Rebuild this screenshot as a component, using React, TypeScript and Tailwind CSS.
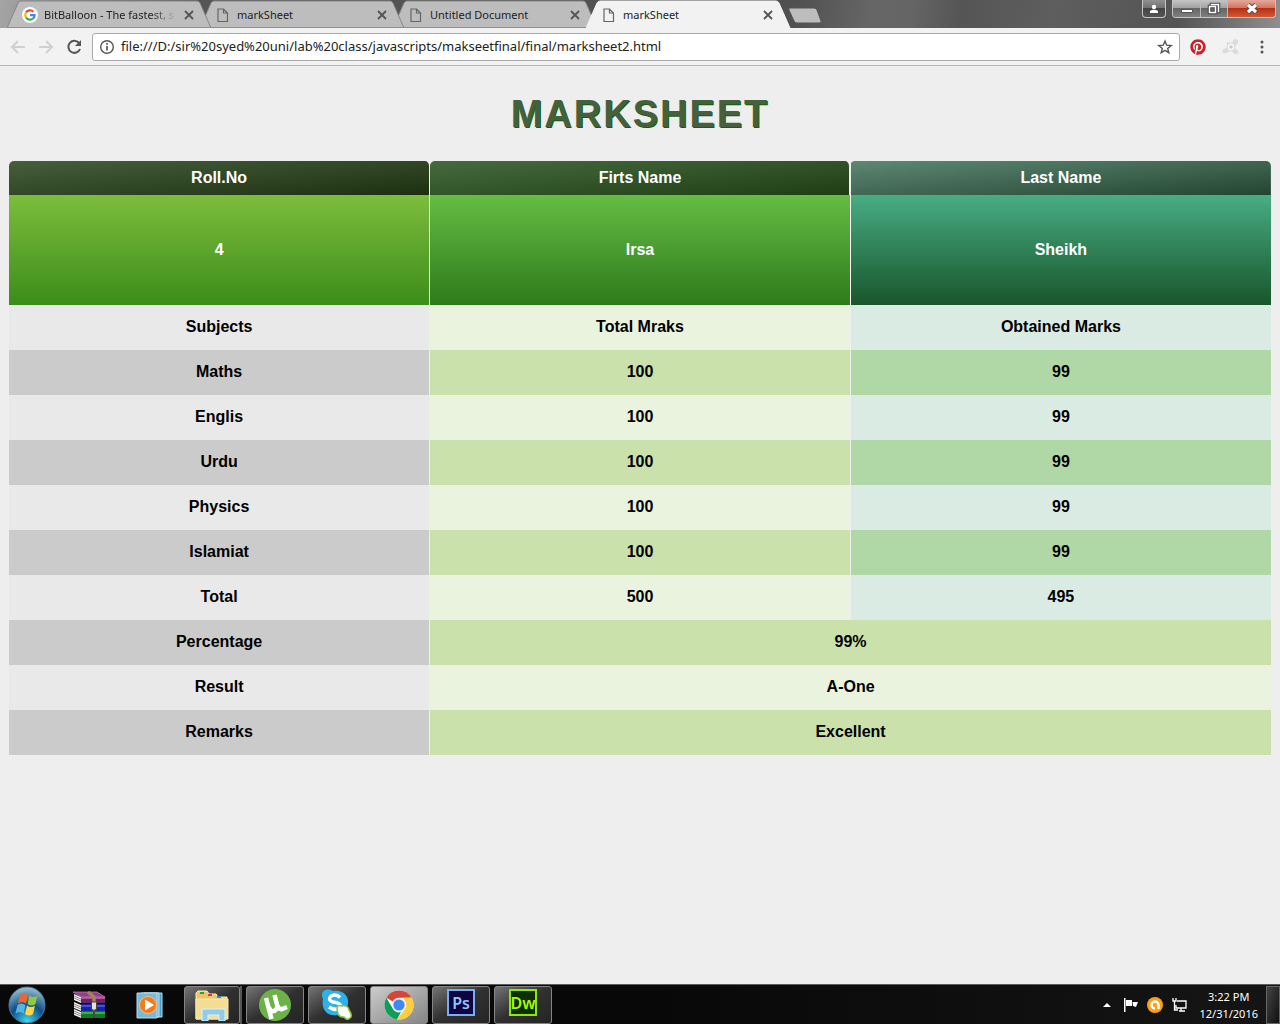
import { useState } from "react";
import { FaPinterest } from "react-icons/fa";

const tabs = [
  { title: "BitBalloon - The fastest, s", google: true, layer: "z-[3]" },
  { title: "markSheet", layer: "z-[2]" },
  { title: "Untitled Document", layer: "z-[1]" },
  { title: "markSheet", active: true, layer: "z-[4]" },
];

function PageIcon() {
  return (
    <svg className="h-4 w-4 shrink-0" viewBox="0 0 16 16" fill="none" stroke="#666" strokeWidth="1.2">
      <path d="M3 2h5.5l4 4v8.5H3zM8.5 2v4h4" />
    </svg>
  );
}

function GoogleIcon() {
  return (
    <svg className="h-4 w-4 shrink-0" viewBox="0 0 16 16" fill="none" strokeWidth="2.2">
      <circle cx="8" cy="8" r="8" fill="#fff" />
      <path d="M4 5.5a4.6 4.6 0 0 1 7.3-.8" stroke="#ea4335" />
      <path d="M4 5.5a4.8 4.8 0 0 0 0 5" stroke="#fbbc05" />
      <path d="M4 10.5a4.6 4.6 0 0 0 7 1" stroke="#34a853" />
      <path d="M8 8.2h4.6q0 2.2-1.6 3.3" stroke="#4285f4" />
    </svg>
  );
}

function Tab({ title, google, active, layer }: { title: string; google?: boolean; active?: boolean; layer: string }) {
  return (
    <li className={`relative -mr-[13px] flex h-7 w-[206px] shrink-0 items-center ${layer}`}>
      <svg className="absolute inset-0 h-full w-full" viewBox="0 0 206 28">
        <path d="M0 28L11 3Q12 1 14 1H190Q192 1 193 3L204 28" fill={active ? "#f2f2f2" : "#bdbdbd"} stroke={active ? "#f2f2f2" : "#858585"} />
        {!active && <path d="M0 27.5H206" stroke="#8e8e8e" />}
      </svg>
      <div className="relative flex w-full items-center gap-1.5 pr-[18px] pl-[15px] pt-0.5">
        {google ? <GoogleIcon /> : <PageIcon />}
        <span className={`flex-1 whitespace-nowrap text-[11px] leading-4 text-[#222] ${google ? "[mask-image:linear-gradient(to_right,black_80%,transparent)]" : ""}`}>{title}</span>
        <button aria-label="Close tab" className="h-3 w-3">
          <svg viewBox="0 0 12 12" stroke="#555" strokeWidth="1.8"><path d="M2 2l8 8M10 2l-8 8" /></svg>
        </button>
      </div>
    </li>
  );
}

function WindowControls() {
  const glass = "flex items-center justify-center border-r border-[#bbb] bg-[linear-gradient(#c4c4c4,#a0a0a0_50%,#656565_50%,#808080)]";
  return (
    <div className="mr-1 ml-auto flex shrink-0 gap-1.5">
      <button aria-label="Profile" className="flex h-[18px] w-6 items-center justify-center rounded-b border border-t-0 border-[#c5c5c5] bg-[linear-gradient(#909090,#707070_50%,#444_50%,#555)]">
        <svg className="h-3 w-3" viewBox="0 0 12 12" fill="#fff"><circle cx="6" cy="4" r="2.2" /><path d="M2 10V8q4-2.5 8 0v2z" /></svg>
      </button>
      <div className="flex h-[18px] overflow-hidden rounded-b border border-t-0 border-[#c5c5c5]">
        <button aria-label="Minimize" className={`w-7 ${glass}`}>
          <svg className="h-4 w-4" viewBox="0 0 16 16" fill="#fff" stroke="#555"><path d="M2.5 8.5h11v3h-11z" /></svg>
        </button>
        <button aria-label="Restore" className={`w-[27px] ${glass}`}>
          <svg className="h-4 w-4" viewBox="0 0 16 16" fill="none"><path d="M5.5 4V3.5h7v7H12M3.5 5.5h6v6h-6z" stroke="#444" strokeWidth="3.5" /><path d="M5.5 4V3.5h7v7H12M3.5 5.5h6v6h-6z" stroke="#fff" strokeWidth="1.5" /></svg>
        </button>
        <button aria-label="Close window" className="flex w-[47px] items-center justify-center bg-[linear-gradient(#e5a99c,#d0705a_50%,#b82f12_50%,#d05a35)]">
          <svg className="h-4 w-4" viewBox="0 0 16 16"><path d="M4 4l8 7M12 4l-8 7" stroke="#555" strokeWidth="5" /><path d="M4 4l8 7M12 4l-8 7" stroke="#fff" strokeWidth="3" /></svg>
        </button>
      </div>
    </div>
  );
}

function BrowserBar() {
  const [url, setUrl] = useState("file:///D:/sir%20syed%20uni/lab%20class/javascripts/makseetfinal/final/marksheet2.html");
  return (
    <header className="shrink-0 font-['Noto_Sans','Open_Sans',sans-serif]">
      <div className="flex h-7 bg-[linear-gradient(100deg,#a5a5a5,#555_15%,#505050_62%,#666_68%,#656565_71%,#555_75%,#5e5e5e_82%,#545454_92%,#8f8f8f)]">
        <ul className="flex pl-[7px]" aria-label="Tabs">
          {tabs.map((tab, i) => <Tab key={i} {...tab} />)}
        </ul>
        <button aria-label="New tab" className="ml-2 h-7 w-9 shrink-0">
          <svg viewBox="0 0 36 28"><path d="M3 8h24q2 0 3 2l4 11q1 2-2 2H10q-2 0-3-2L2 10q-1-2 1-2z" fill="#bdbdbd" stroke="#555" /></svg>
        </button>
        <WindowControls />
      </div>
      <div className="flex h-[38px] items-center border-b border-[#b6b6b6] bg-[#f2f2f2] pr-2.5 pl-2">
        <button aria-label="Back" className="mr-2 h-5 w-5"><svg viewBox="0 0 20 20" fill="none" stroke="#d0d0d0" strokeWidth="2"><path d="M17 10H4M10 4l-6 6 6 6" /></svg></button>
        <button aria-label="Forward" className="mr-2 h-5 w-5"><svg viewBox="0 0 20 20" fill="none" stroke="#d0d0d0" strokeWidth="2"><path d="M3 10h13M10 4l6 6-6 6" /></svg></button>
        <button aria-label="Reload" className="mr-2 h-5 w-5"><svg viewBox="0 0 20 20" fill="none" stroke="#555" strokeWidth="2"><path d="M15 6a6 6 0 1 0 1 6" /><path d="M17 3v6h-6z" fill="#555" stroke="none" /></svg></button>
        <div className="flex h-7 min-w-0 flex-1 items-center gap-1.5 rounded-[3px] border border-[#a9a9a9] bg-white px-1.5">
          <svg className="h-4 w-4 shrink-0" viewBox="0 0 16 16" fill="none" stroke="#555" strokeWidth="1.4"><circle cx="8" cy="8" r="6.3" /><path d="M8 7v4.5M8 4v1.7" strokeWidth="1.7" /></svg>
          <input aria-label="Address" className="min-w-0 flex-1 bg-transparent text-[13px] text-[#222] outline-none" value={url} onChange={(e) => setUrl(e.target.value)} />
          <button aria-label="Bookmark this page" className="h-4 w-4"><svg viewBox="0 0 16 16" fill="none" stroke="#555" strokeWidth="1.4"><path d="M8 2l1.7 4.2 4.5.3-3.5 2.9 1.1 4.4L8 11.4l-3.8 2.4 1.1-4.4L1.8 6.5l4.5-.3z" /></svg></button>
        </div>
        <button aria-label="Pinterest" className="ml-2.5 flex h-4 w-4 items-center justify-center rounded-full bg-white"><FaPinterest size={16} color="#cb2027" /></button>
        <button aria-label="Extension" className="ml-4 h-[18px] w-[18px]"><svg viewBox="0 0 18 18" fill="#dcdcdc"><circle cx="13.5" cy="3.5" r="2.5" /><circle cx="14" cy="14" r="2.5" /><circle cx="3" cy="13" r="2.5" /><path d="M5 4l4 1 4-2 2 2-2 4 2 5-3 1-3-2-5 2-3-2 4-4z" /><circle cx="9" cy="9" r="2.5" fill="#ccc" stroke="#f8f8f8" strokeWidth="1.5" /></svg></button>
        <button aria-label="Menu" className="ml-3.5 h-4 w-4"><svg viewBox="0 0 16 16" fill="#555"><circle cx="8" cy="3" r="1.5" /><circle cx="8" cy="8" r="1.5" /><circle cx="8" cy="13" r="1.5" /></svg></button>
      </div>
    </header>
  );
}

const rows = [
  ["Subjects", "Total Mraks", "Obtained Marks"],
  ["Maths", "100", "99"],
  ["Englis", "100", "99"],
  ["Urdu", "100", "99"],
  ["Physics", "100", "99"],
  ["Islamiat", "100", "99"],
  ["Total", "500", "495"],
  ["Percentage", "99%"],
  ["Result", "A-One"],
  ["Remarks", "Excellent"],
];

function Marksheet() {
  return (
    <main className="flex-1 bg-[#eee] px-2 font-['Liberation_Sans',Arial,sans-serif]">
      <h1 className="pt-[26px] text-center text-[38px] leading-[44px] font-bold tracking-[2px] text-[#465f3d] [text-shadow:1px_1px_0_#0a640a]">MARKSHEET</h1>
      <table className="mx-px mt-[25px] w-[calc(100%-2px)] table-fixed border-collapse text-center text-base leading-6 font-bold text-black">
        <thead className="text-white">
          <tr className="h-[34px]">
            <th scope="col" className="rounded-t-[5px] border-r border-[#eee] bg-[linear-gradient(175deg,#465f3c,#1c3010)] bg-clip-padding">Roll.No</th>
            <th scope="col" className="rounded-t-[5px] border-r border-[#eee] bg-[linear-gradient(175deg,#456b3d,#1f3d14)] bg-clip-padding">Firts Name</th>
            <th scope="col" className="rounded-t-[5px] bg-[linear-gradient(175deg,#5d8874,#234430)]">Last Name</th>
          </tr>
          <tr className="h-[110px]">
            <td className="border-r border-white bg-linear-to-b from-[#7dbd3c] to-[#3b8d19] bg-clip-padding">4</td>
            <td className="border-r border-white bg-linear-to-b from-[#65bd43] to-[#2d7b1b] bg-clip-padding">Irsa</td>
            <td className="bg-linear-to-b from-[#48ad84] to-[#19562c]">Sheikh</td>
          </tr>
        </thead>
        <tbody>
          {rows.map(([label, total, obtained], i) => (
            <tr key={label} className="h-[45px]">
              <th scope="row" className={`border-r border-[#eee] pb-0.5 ${i % 2 ? "bg-[#cbcbcb]" : "bg-[#e9e9e9]"}`}>{label}</th>
              <td colSpan={obtained ? 1 : 2} className={`pb-0.5 ${obtained ? "border-r border-[#eee]" : ""} ${i % 2 ? "bg-[#cae1ab]" : "bg-[#e9f3de]"}`}>{total}</td>
              {obtained && <td className={`pb-0.5 ${i % 2 ? "bg-[#b0d7a6]" : "bg-[#daebe4]"}`}>{obtained}</td>}
            </tr>
          ))}
        </tbody>
      </table>
    </main>
  );
}

function StartIcon() {
  return (
    <svg viewBox="0 0 38 38">
      <defs><radialGradient id="orb" cx=".5" cy=".95" r=".95"><stop stopColor="#3fd6f0" /><stop offset=".5" stopColor="#0f4f86" /><stop offset="1" stopColor="#9cc3d6" /></radialGradient></defs>
      <circle cx="19" cy="19" r="18" fill="url(#orb)" stroke="#477c9b" />
      <path d="M12 9q5-3 8 0l-2 8.500q-4-3-8 0z" fill="#ee662d" /><path d="M21.500 9.500q4 3 8 0l-2 8.500q-4 3-8 0z" fill="#91c83e" /><path d="M9.500 19q4-3 8 0l-2 8.500q-4-3-8 0z" fill="#54b3e8" /><path d="M19 19.500q4 3 8 0l-2 8.500q-4 3-8 0z" fill="#ffd447" />
    </svg>
  );
}

function ArchiveIcon() {
  return (
    <svg viewBox="0 0 36 32">
      {[["#b765a5", "#6d235f", 5], ["#4869e2", "#1425a0", 13], ["#48c548", "#0f7a22", 20]].map(([light, deep, y]) => (
        <g key={y} transform={`translate(2 ${y})`}>
          <path d="M1 0l7 3v6L1 6z" fill="#f3f3f3" />
          <path d="M1 2l7 3M1 4l7 3" stroke="#888" />
          <path d="M8 2h24v7H8z" fill={deep} />
          <path d="M8 4h24" stroke={light} strokeWidth="1.5" />
        </g>
      ))}
      <path d="M2 3h24l8 5H11z" fill="#943c85" stroke="#c483b8" strokeWidth=".7" />
      <path d="M17 3l6 5v6" fill="none" stroke="#a38557" strokeWidth="3.5" />
      <path d="M23 20v9" stroke="#4c4436" strokeWidth="2" />
      <path d="M20.500 13h5v7q-2.500 3-5 0z" fill="#e3e3d7" stroke="#4c4436" />
    </svg>
  );
}

function MediaIcon() {
  return <svg viewBox="0 0 30 30"><path d="M9 3h18v24H9z" fill="#4c9fc6" stroke="#a9e0f2" /><path d="M6 3h18v24H6z" fill="#68add0" stroke="#b6e2f0" /><path d="M2 3h20v25H2z" fill="#79b9d8" stroke="#b7dbe8" /><circle cx="13" cy="15" r="8.5" fill="#f17c1b" stroke="#ffbd7d" /><path d="M10 9.500v11l9-5.500z" fill="#fff" /></svg>;
}

function FolderIcon() {
  return <svg viewBox="0 0 36 32"><path d="M2 4l2-2h9l2 3h7l2 3h9v22H2z" fill="#e9c66a" stroke="#fff1b6" /><path d="M6 3h4v2H6z" fill="#20a33b" /><path d="M14 5h4v2h-4z" fill="#d53c2b" /><path d="M23 7h4v2h-4z" fill="#3585d2" /><path d="M2 10h32v20H2z" fill="#f3dc94" stroke="#f9e9ae" /><path d="M8 20h23v12h-6v-6H14v6H8z" fill="#91cce8" stroke="#d5f4ff" /></svg>;
}

function TorrentIcon() {
  return <svg viewBox="0 0 34 34"><circle cx="17" cy="17" r="16" fill="#6ab344" /><path d="M8 10l5.500 21M10 18q3 7 7 4.500 3-2 2-6L16.500 7M18.500 15q2 7 5.500 6l5-2" fill="none" stroke="#fff" strokeWidth="4.5" /></svg>;
}

function SkypeIcon() {
  return <svg viewBox="0 0 34 34"><path d="M3 11C-1 3 7-1 13 3 24 1 31 10 27 19c4 8-4 12-10 8C7 29 1 21 3 11z" fill="#2cb2e8" /><path d="M20 9.500q-4-4-9-1.500-4 4 2 6 9 1 7 5.500-4 4-11-.5" fill="none" stroke="#fff" strokeWidth="3.5" /><path d="M17 21q0-5 5-3 6-1 7 4 4 6 1 8-3 3-6-1-6 1-7-8z" fill="#fff" stroke="#8cc33b" strokeWidth="1.5" /></svg>;
}

function ChromeIcon() {
  return <svg viewBox="0 0 32 32"><circle cx="16" cy="16" r="14.5" fill="#fff" /><path d="M3.400 8.750A14.500 14.500 0 0 1 28.600 8.750H16A7.250 7.250 0 0 0 9.700 12.400z" fill="#da4437" /><path d="M3.400 8.750L9.700 19.600A7.250 7.250 0 0 0 18 23L14 30.400A14.500 14.500 0 0 1 3.400 8.750z" fill="#0f9d58" /><path d="M28.600 8.750A14.500 14.500 0 0 1 14 30.400L22.300 19.600A7.250 7.250 0 0 0 21 11V8.750z" fill="#ffcd40" /><circle cx="16" cy="16" r="7" fill="#eee" /><circle cx="16" cy="16" r="5.6" fill="#4285f4" /></svg>;
}

function Taskbar() {
  const button = "flex h-[38px] w-[58px] items-center justify-center rounded-[3px] border border-[#858585]";
  const dark = "bg-linear-to-br from-[#747474] via-[#303030] via-50% to-[#252525]";
  const badge = "mb-1 flex h-[27px] w-7 items-center justify-center border-2 text-base leading-4 font-semibold";
  return (
    <footer className="flex h-10 shrink-0 items-center border-t border-[#5b5b5b] bg-linear-to-r from-[#080808] via-[#080808] to-[#151515] font-['Noto_Sans',sans-serif] text-white">
      <button aria-label="Start" className="ml-2 w-[38px]"><StartIcon /></button>
      <button aria-label="WinRAR" className="ml-[25px] w-9"><ArchiveIcon /></button>
      <button aria-label="Media Player" className="ml-7 w-[30px]"><MediaIcon /></button>
      <div className="ml-[19px] flex gap-1">
        <div className="flex w-[58px] border-r-2 border-[#555]"><button aria-label="Explorer" className={`${button} ${dark}`}><span className="w-9"><FolderIcon /></span></button></div>
        <button aria-label="uTorrent" className={`${button} ${dark}`}><span className="w-[34px]"><TorrentIcon /></span></button>
        <button aria-label="Skype" className={`${button} ${dark}`}><span className="w-[34px]"><SkypeIcon /></span></button>
        <button aria-label="Chrome" className={`${button} bg-linear-to-br from-[#ccc] to-[#858585]`}><span className="w-8"><ChromeIcon /></span></button>
        <button aria-label="Photoshop" className={`${button} ${dark}`}><span className={`${badge} border-[#76aef5] bg-[#11033d] text-[#8bc5ff]`}>Ps</span></button>
        <button aria-label="Dreamweaver" className={`${button} ${dark}`}><span className={`${badge} border-[#8cea00] bg-[#102c08] text-[#a1ff00]`}>Dw</span></button>
      </div>
      <div className="ml-auto flex items-center">
        <button aria-label="Show hidden icons" className="mr-2 h-4 w-4"><svg viewBox="0 0 16 16" fill="#fff"><path d="M4 10l4-4 4 4z" /></svg></button>
        <svg className="mr-2 h-4 w-4" viewBox="0 0 16 16" fill="#fff"><path d="M1 1h1.500v14H1zM3 3h6v6H3zM9.500 5H15l-2 5-3-1z" /></svg>
        <svg className="mr-2 h-4 w-4" viewBox="0 0 16 16"><circle cx="8" cy="8" r="8" fill="#ff9f16" /><path d="M8 11.500A3.500 3.500 0 1 1 11.500 8v4" fill="none" stroke="#fff" strokeWidth="2.4" /></svg>
        <svg className="mr-3 h-4 w-4" viewBox="0 0 16 16" fill="none" stroke="#fff"><path d="M6 4h9v7H5V8M8 14h6M10 11v3M2 1v3h3V1M3.500 4v9H7" strokeWidth="1.3" /></svg>
        <time className="text-center text-[11px] leading-[17px]">3:22 PM<br />12/31/2016</time>
        <button aria-label="Show desktop" className="ml-2 h-[38px] w-3.5 border border-[#666] bg-linear-to-br from-[#444] to-[#111]" />
      </div>
    </footer>
  );
}

export default function App() {
  return <div className="flex min-h-screen flex-col bg-[#eee]"><BrowserBar /><Marksheet /><Taskbar /></div>;
}
